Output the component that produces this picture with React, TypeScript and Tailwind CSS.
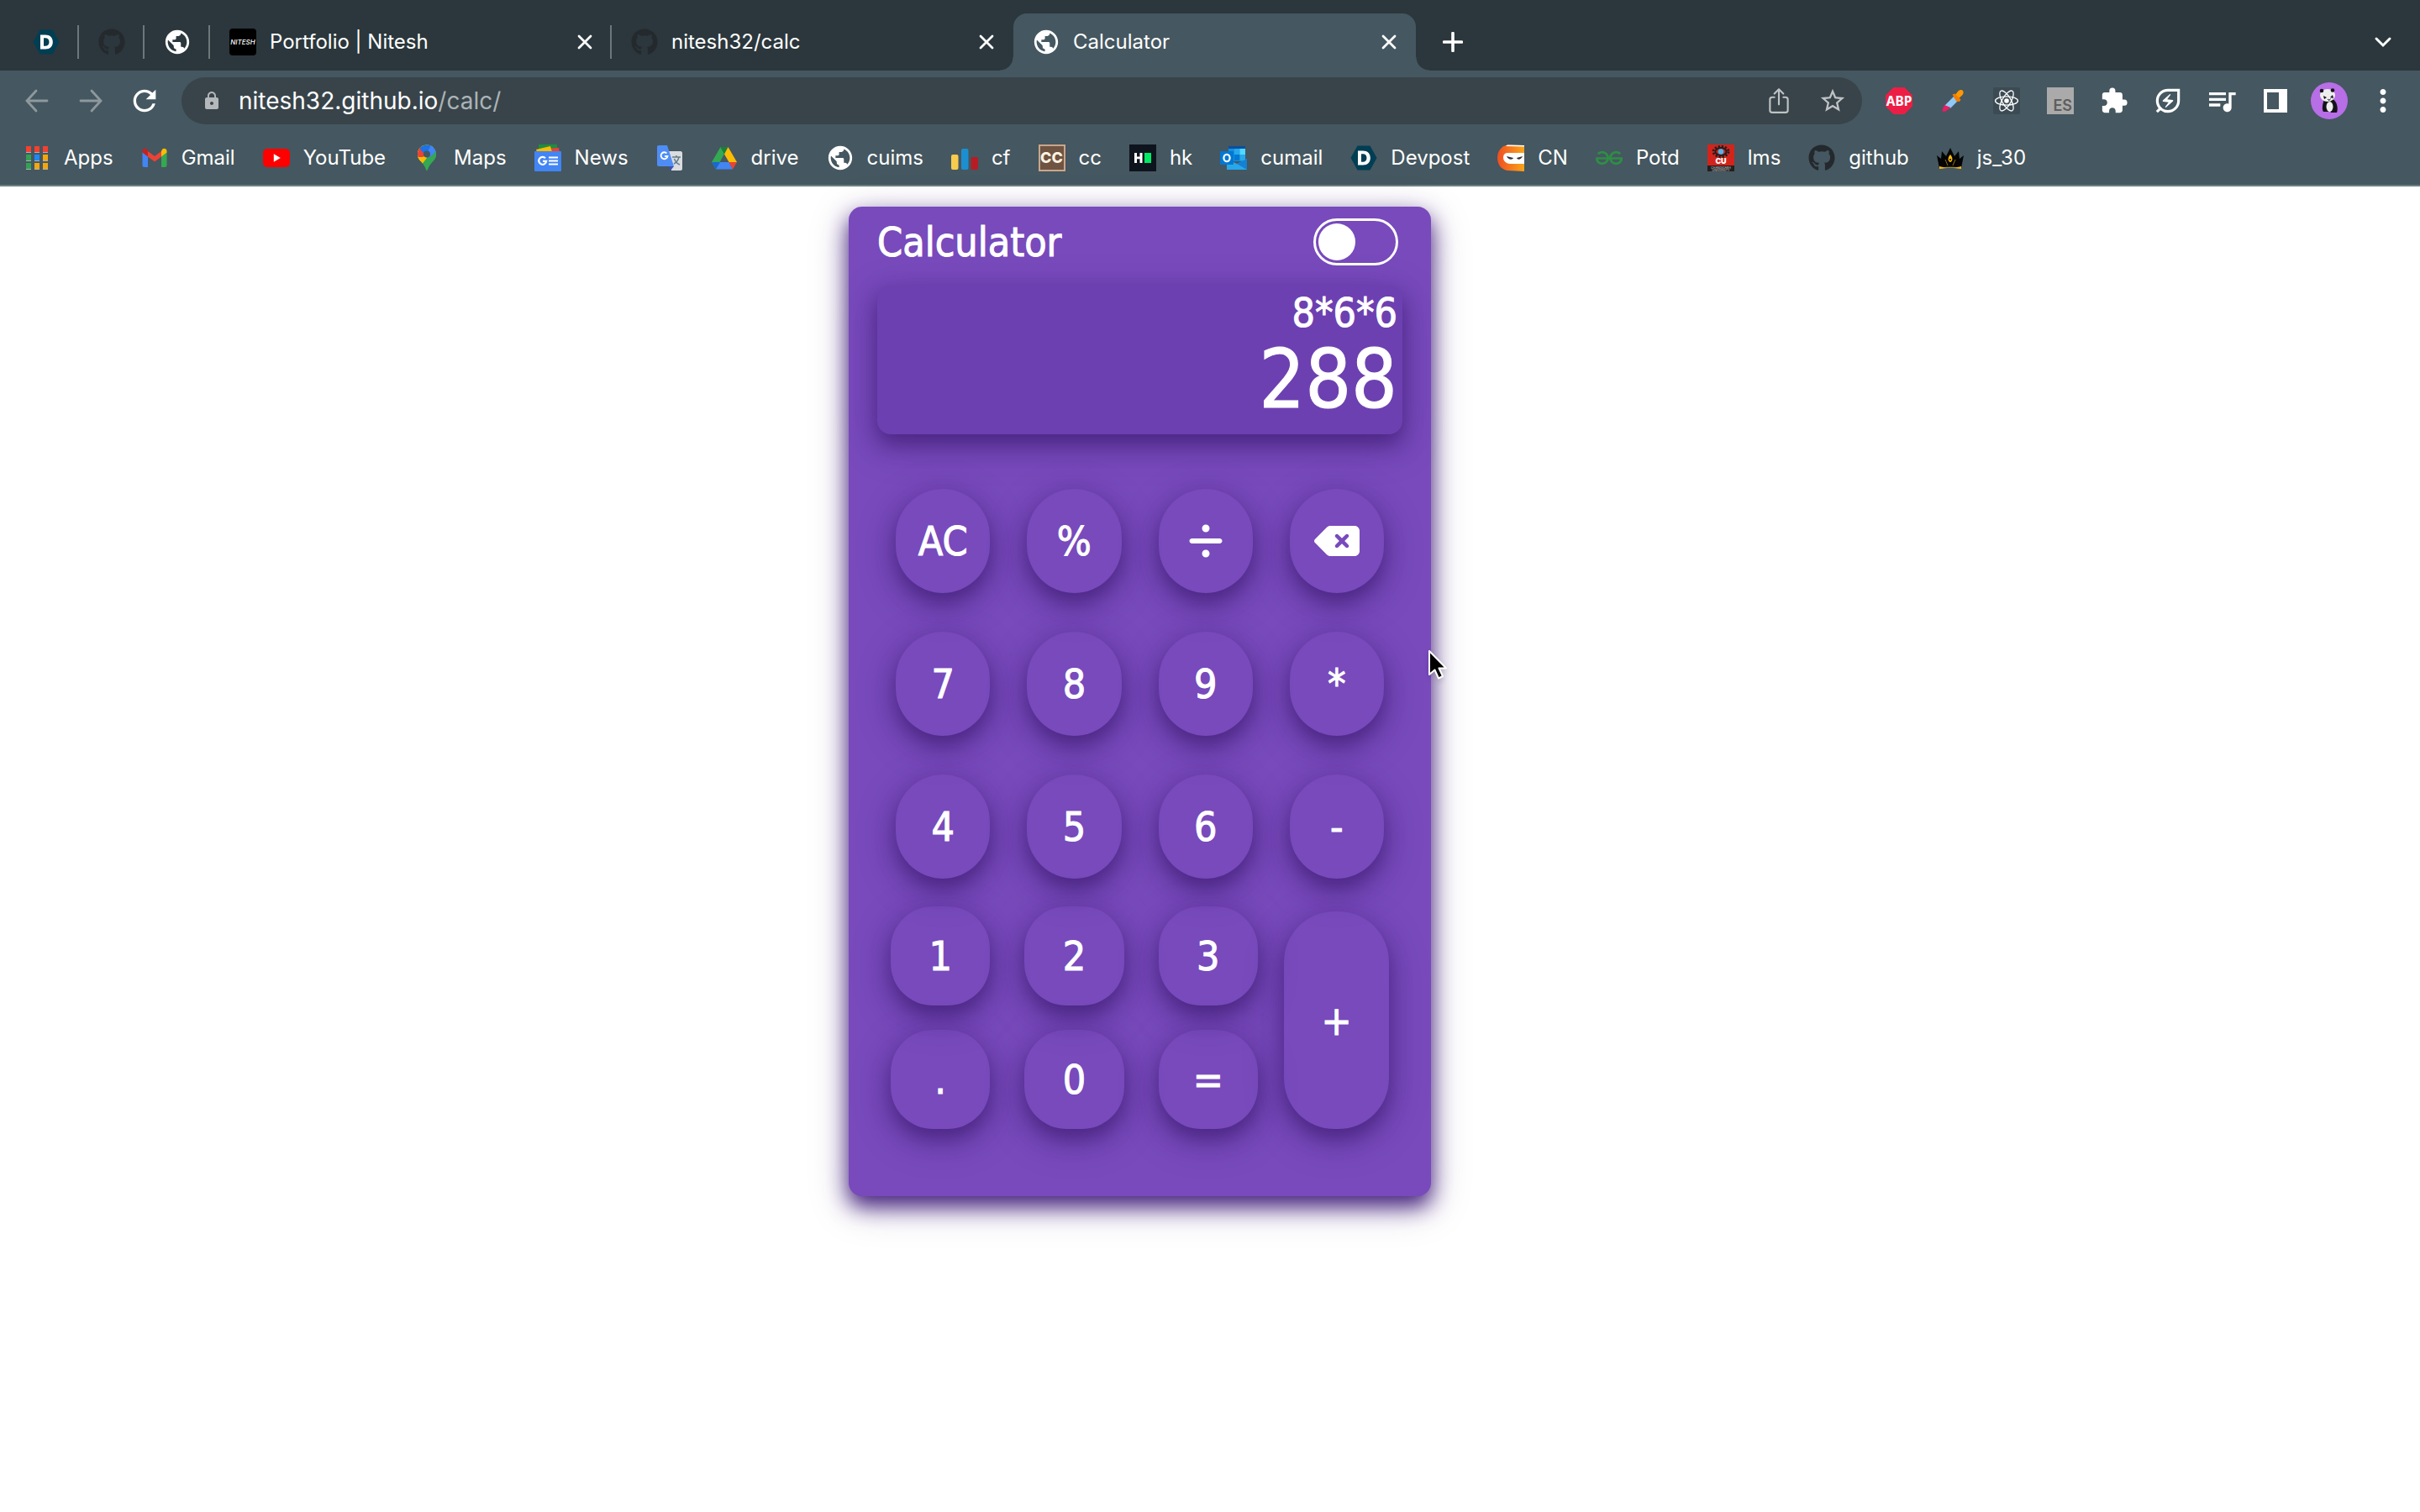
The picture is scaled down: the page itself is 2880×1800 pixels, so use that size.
import React, { useState } from "react";
import {
  MdPublic,
  MdLock,
  MdRefresh,
  MdStarBorder,
  MdExtension,
  MdOutlineEnergySavingsLeaf,
  MdQueueMusic,
  MdMoreVert,
} from "react-icons/md";
import { IoShareOutline } from "react-icons/io5";
import { FaDivide, FaDeleteLeft, FaGithub } from "react-icons/fa6";
import { SiGeeksforgeeks } from "react-icons/si";

function Devpost({ className = "size-8" }: { className?: string }) {
  return (
    <svg viewBox="0 0 32 32" className={className} aria-hidden="true">
      <path d="M8.500 1.500h15L31.500 16l-8 14.500h-15L0.500 16z" fill="#003e54" />
      <path
        fillRule="evenodd"
        d="M9 7.500h6c5.500 0 8.800 3.200 8.800 8.500s-3.300 8.500-8.800 8.500H9zM13 11.300v9.400h2c2.800 0 4.500-1.700 4.500-4.700s-1.700-4.700-4.500-4.700z"
        fill="#fff"
      />
    </svg>
  );
}

function Globe() {
  return <MdPublic className="size-[34px] -m-px text-white" />;
}

function Github() {
  return <FaGithub className="size-8 text-[#24292e]" />;
}

function CloseX() {
  return (
    <svg viewBox="0 0 20 20" className="size-5" aria-hidden="true">
      <path d="M3 3l14 14M17 3L3 17" stroke="#fff" strokeWidth="2.800" strokeLinecap="round" />
    </svg>
  );
}

function AppsIcon() {
  const colors = ["#f6402f", "#f6402f", "#f6402f", "#33a152", "#1e88f5", "#f4a60b", "#33a152", "#f4a60b", "#f4a60b"];
  return (
    <svg viewBox="0 0 32 32" className="size-8" aria-hidden="true">
      {colors.map((c, i) => (
        <g key={i}>
          <rect x={3 + (i % 3) * 10} y={3 + Math.floor(i / 3) * 10} width="6" height="7" fill="#a9b1b5" />
          <rect x={3 + (i % 3) * 10} y={2 + Math.floor(i / 3) * 10} width="6" height="7" fill={c} />
        </g>
      ))}
    </svg>
  );
}

function Gmail() {
  return (
    <svg viewBox="0 0 32 32" className="size-8" aria-hidden="true">
      <path d="M1.500 9v16c0 1.200.9 2 2 2H8V14z" fill="#4285f4" />
      <path d="M30.500 9v16c0 1.200-.9 2-2 2H24V14z" fill="#34a853" />
      <path d="M24 8v6.500l6.500-5V7.800c0-2.700-3-4-5-2.600z" fill="#fbbc04" />
      <path d="M8 14.500V8l8 6 8-6v6.500l-8 6z" fill="#ea4335" />
      <path d="M1.500 7.800v1.700l6.500 5V8L6.500 5.200c-2-1.400-5-.1-5 2.600z" fill="#c5221f" />
    </svg>
  );
}

function Youtube() {
  return (
    <svg viewBox="0 0 32 32" className="size-8" aria-hidden="true">
      <rect y="5" width="32" height="22" rx="5" fill="#f00" />
      <path d="M12.800 11.300v9.400l8-4.700z" fill="#fff" />
    </svg>
  );
}

function Maps() {
  return (
    <svg viewBox="0 0 32 32" className="size-8" aria-hidden="true">
      <clipPath id="pin">
        <path d="M16 0.500C9.700.5 5 5.400 5 11.500c0 6.500 4.500 8.500 7.500 13 1.500 2.300 2.200 4.500 3.500 7 1.300-2.500 2-4.700 3.500-7C22.500 20 27 18 27 11.500 27 5.400 22.300.5 16 .5z" />
      </clipPath>
      <g clipPath="url(#pin)">
        <rect width="32" height="32" fill="#34a853" />
        <path d="M0 22L16 11 28 0H0z" fill="#fbbc04" />
        <path d="M0 4l8 0 8 8-8 9-8-3z" fill="#fbbc04" />
        <path d="M0 0h9l7 12-5 5-8-1z" fill="#ea4335" />
        <path d="M7 4L14 0h14L15 14z" fill="#1a73e8" />
        <path d="M21 0l8 8-11 8-2-5z" fill="#4285f4" />
        <path d="M28 7L10 26l6 6 14-8z" fill="#34a853" />
        <path d="M5 15l6 0 5-3 0 4-7 9z" fill="#fbbc04" />
      </g>
      <circle cx="16" cy="11.500" r="4" fill="#455760" />
    </svg>
  );
}

function News() {
  return (
    <svg viewBox="0 0 32 32" className="size-8" aria-hidden="true">
      <path d="M5 0h22v8H5z" fill="#1e8e3e" />
      <path d="M14 5l15-1 1 6H14z" fill="#ea4335" />
      <path d="M2 6l17-4 2 7H3z" fill="#fbbc04" />
      <rect y="8" width="32" height="24" rx="1" fill="#4285f4" />
      <path d="M13 16.200a4.500 4.500 0 1 0 1.200 3.600H10" fill="none" stroke="#fff" strokeWidth="2.200" />
      <path d="M17 15.500h11M17 19.500h11M17 23.500h11" stroke="#fff" strokeWidth="2.200" />
    </svg>
  );
}

function Translate() {
  return (
    <svg viewBox="0 0 32 32" className="size-8" aria-hidden="true">
      <path d="M13 8h16c1 0 2 1 2 2v19c0 1-1 2-2 2H18z" fill="#dadce0" />
      <path d="M15 26h6l-4 5z" fill="#3b50ba" />
      <path d="M3 1h10l8 25H3c-1.200 0-2-.8-2-2V3c0-1.200.8-2 2-2z" fill="#4f8df6" />
      <path d="M12.500 10.500a4 4 0 1 0 1 3.500H10" fill="none" stroke="#fff" strokeWidth="1.800" />
      <path d="M19 15h10M24 13v2M27 15c-1 4-4 7-6 8M21.500 17c1 3 4 6 6.500 7" fill="none" stroke="#607d8b" strokeWidth="1.500" />
    </svg>
  );
}

function Drive() {
  return (
    <svg viewBox="0 0 32 32" className="size-8" aria-hidden="true">
      <path d="M11.500 3L1 21l5 8.500L16 11z" fill="#34a853" />
      <path d="M11.500 3h9L16 11.500z" fill="#188038" />
      <path d="M20.500 3L16 11.500 21.500 21H31z" fill="#fbbc04" />
      <path d="M1 21h10L6 29.500z" fill="#1967d2" />
      <path d="M11 21h10.500l4.500 8.500H6z" fill="#4285f4" />
      <path d="M21.500 21H31l-5 8.500z" fill="#ea4335" />
    </svg>
  );
}

function Codeforces() {
  return (
    <svg viewBox="0 0 32 32" className="size-8" aria-hidden="true">
      <rect y="12" width="8.500" height="18" rx="2" fill="#f7cb4d" />
      <rect x="12" y="5" width="8.500" height="25" rx="2" fill="#1c8fd0" />
      <rect x="23.500" y="15" width="8.500" height="15" rx="2" fill="#b71c25" />
    </svg>
  );
}

function CodeChef() {
  return (
    <span className="flex size-8 items-center justify-center border-2 border-[#c9a68c] bg-[#6f5442] text-lg font-extrabold leading-none text-[#fdf3e3]">
      CC
    </span>
  );
}

function HackerRank() {
  return (
    <svg viewBox="0 0 32 32" className="size-8" aria-hidden="true">
      <rect width="32" height="32" fill="#0e141e" />
      <path d="M6 10h3v4.500h3.500V10h3v12h-3v-4.700H9V22H6z" fill="#fff" />
      <rect x="18" y="10" width="8" height="12" fill="#00ea64" />
    </svg>
  );
}

function Outlook() {
  return (
    <svg viewBox="0 0 32 32" className="size-8" aria-hidden="true">
      <rect x="10" y="2" width="20" height="18" fill="#1490df" />
      <rect x="10" y="2" width="20" height="3" fill="#0a4fa3" />
      <rect x="17" y="5" width="6.500" height="7" fill="#28a8ea" />
      <rect x="23.500" y="5" width="6.500" height="7" fill="#50d9ff" />
      <rect x="17" y="12" width="6.500" height="7" fill="#0078d4" />
      <rect x="23.500" y="12" width="6.500" height="7" fill="#28a8ea" />
      <path d="M8 17l12 6 12-6v13H8z" fill="#28a8ea" />
      <path d="M20 23l12-6v13z" fill="#1481d2" />
      <rect y="8" width="16" height="16" rx="1" fill="#0078d4" />
      <ellipse cx="8" cy="16" rx="3.600" ry="4.200" fill="none" stroke="#fff" strokeWidth="2.200" />
    </svg>
  );
}

function CodingNinjas() {
  return (
    <svg viewBox="0 0 32 32" className="size-8" aria-hidden="true">
      <defs>
        <linearGradient id="ninja">
          <stop offset="0" stopColor="#f04e23" />
          <stop offset="1" stopColor="#f9a51a" />
        </linearGradient>
      </defs>
      <path d="M12 0.500L32 1v31l-20-1C5 30 0 24 0 16S5 1.500 12 .5z" fill="url(#ninja)" />
      <path d="M12 0.500L32 1v1.500L10 2z" fill="#fff" />
      <path d="M32 10H13c-4 0-6 2-6 5.500S10 23 15 23h17z" fill="#fff" />
      <path d="M11 14l8 2c-1 2.500-6 2.500-8-2zM30 14l-7 2c1 2.500 5 2.500 7-2z" fill="#333" />
    </svg>
  );
}

function ChandigarhUniversity() {
  return (
    <svg viewBox="0 0 32 32" className="size-8" aria-hidden="true">
      <rect width="32" height="32" fill="#d3241c" />
      <ellipse cx="16" cy="8.500" rx="9" ry="6" fill="none" stroke="#231f20" strokeWidth="3" strokeDasharray="2.200 1.800" />
      <ellipse cx="16" cy="8.500" rx="6.500" ry="4.500" fill="none" stroke="#231f20" strokeWidth="2" />
      <circle cx="16" cy="8.500" r="3.200" fill="#52b4e8" />
      <rect y="25" width="32" height="7" fill="#231f20" />
      <text x="16" y="23" textAnchor="middle" fontSize="9" fontWeight="900" fill="#fff">
        CU
      </text>
      <text x="16" y="28.500" textAnchor="middle" fontSize="3.500" fill="#ddd">
        CHANDIGARH
      </text>
      <text x="16" y="31.500" textAnchor="middle" fontSize="3.500" fill="#ddd">
        UNIVERSITY
      </text>
    </svg>
  );
}

function Crown() {
  return (
    <svg viewBox="0 0 32 32" className="size-8" aria-hidden="true">
      <path d="M0 13l5 4 1-9 5 6 5-10 5 10 5-6 1 9 5-4-3 15c-8-2-18-2-26 0z" fill="#050505" />
      <path d="M16 12c3 3 3.500 8 0 9-3.500-1-3-6 0-9z" fill="#f5b90f" />
      <circle cx="16" cy="18" r="1" fill="#050505" />
      <path d="M10 18l3 7M22 18l-3 7" stroke="#b98a10" strokeWidth="0.800" />
      <path d="M3 26c8 2 18 2 26 0v3c-8-1.500-18-1.500-26 0z" fill="#f5b90f" />
    </svg>
  );
}

function ReactBadge() {
  return (
    <svg viewBox="0 0 32 32" className="size-8" aria-hidden="true">
      <rect width="32" height="32" rx="2" fill="#3c4b53" />
      <g fill="none" stroke="#fff" strokeWidth="1.300">
        <ellipse cx="16" cy="16" rx="13.500" ry="5.200" />
        <ellipse cx="16" cy="16" rx="13.500" ry="5.200" transform="rotate(60 16 16)" />
        <ellipse cx="16" cy="16" rx="13.500" ry="5.200" transform="rotate(120 16 16)" />
      </g>
      <circle cx="16" cy="16" r="2.800" fill="#fff" />
    </svg>
  );
}

function AdblockPlus() {
  return (
    <svg viewBox="0 0 32 32" className="size-8" aria-hidden="true">
      <path d="M9.500 0h13L32 9.500v13L22.500 32h-13L0 22.500v-13z" fill="#ed1e45" />
      <text x="16" y="22" textAnchor="middle" fontSize="15.500" fontWeight="700" fontFamily="Noto Sans" fill="#fff">
        ABP
      </text>
    </svg>
  );
}

function Dropper() {
  return (
    <svg viewBox="0 0 32 32" className="size-8" aria-hidden="true">
      <path d="M17 11l5 5-9 9-7-3z" fill="#90caf9" />
      <path d="M6 21l7.500 3-6 4.500-3 .5-1-1 .5-2.500z" fill="#e91e63" />
      <path d="M22 5c2-2.500 5-2.500 6-1s1 4-1.500 6L22 14l-4-4z" fill="#ff9800" />
      <path d="M15.500 8.500l3-1 7 7-1.500 2.500-4-.500z" fill="#f57c00" />
    </svg>
  );
}

function SidePanel() {
  return (
    <svg viewBox="0 0 28 28" className="size-7" aria-hidden="true">
      <path fillRule="evenodd" d="M0 0h28v28H0zM4 4v20h14V4z" fill="#fff" />
    </svg>
  );
}

function Panda() {
  return (
    <svg viewBox="0 0 44 44" className="size-11" aria-hidden="true">
      <circle cx="22" cy="22" r="22" fill="#b76ee6" />
      <path d="M16 20c-2 6-3 12-1 15h6l1-4 2 5h7c2-5 0-14-5-16z" fill="#15121a" />
      <ellipse cx="22.500" cy="29" rx="4" ry="6" fill="#eee" />
      <ellipse cx="20" cy="15.500" rx="9" ry="7.500" fill="#eee" />
      <circle cx="13" cy="10" r="2.300" fill="#15121a" />
      <circle cx="26" cy="9.500" r="2.300" fill="#15121a" />
      <path d="M15 16l4 2-3 2zM26 15l-3 3 4 1z" fill="#15121a" />
      <path d="M20 20l2 1.500 1.500-2" fill="none" stroke="#15121a" />
    </svg>
  );
}

function Arrow({ flip = false }: { flip?: boolean }) {
  return (
    <svg viewBox="0 0 28 28" className="size-7" aria-hidden="true">
      <path
        d={flip ? "M2 14h23M15 2l11 12-11 12" : "M26 14H3M13 2L2 14l11 12"}
        fill="none"
        stroke="#8e989d"
        strokeWidth="2.800"
        strokeLinecap="round"
      />
    </svg>
  );
}

const pinned = [
  { label: "Devpost", icon: <Devpost /> },
  { label: "GitHub", icon: <Github /> },
  { label: "Site", icon: <Globe /> },
];

const bookmarks: { label: string; icon: React.ReactNode }[] = [
  { label: "Apps", icon: <AppsIcon /> },
  { label: "Gmail", icon: <Gmail /> },
  { label: "YouTube", icon: <Youtube /> },
  { label: "Maps", icon: <Maps /> },
  { label: "News", icon: <News /> },
  { label: "", icon: <Translate /> },
  { label: "drive", icon: <Drive /> },
  { label: "cuims", icon: <Globe /> },
  { label: "cf", icon: <Codeforces /> },
  { label: "cc", icon: <CodeChef /> },
  { label: "hk", icon: <HackerRank /> },
  { label: "cumail", icon: <Outlook /> },
  { label: "Devpost", icon: <Devpost /> },
  { label: "CN", icon: <CodingNinjas /> },
  { label: "Potd", icon: <SiGeeksforgeeks className="size-8 text-[#2f8d46]" /> },
  { label: "lms", icon: <ChandigarhUniversity /> },
  { label: "github", icon: <Github /> },
  { label: "js_30", icon: <Crown /> },
];

const extensions: { label: string; icon: React.ReactNode }[] = [
  { label: "Adblock Plus", icon: <AdblockPlus /> },
  { label: "Color picker", icon: <Dropper /> },
  { label: "React tools", icon: <ReactBadge /> },
  {
    label: "ES",
    icon: (
      <span className="flex size-8 items-end justify-end bg-[#aaaaaa] pr-0.5 text-lg font-semibold leading-5 text-[#5e5e5e]">
        ES
      </span>
    ),
  },
  { label: "Extensions", icon: <MdExtension className="size-[34px] text-white" /> },
  { label: "Energy saver", icon: <MdOutlineEnergySavingsLeaf className="size-[38px] text-white" /> },
  { label: "Media control", icon: <MdQueueMusic className="size-10 text-white" /> },
  { label: "Side panel", icon: <SidePanel /> },
  { label: "Profile", icon: <Panda /> },
  { label: "Menu", icon: <MdMoreVert className="size-[42px] text-white" /> },
];

function Tab({ icon, title, active = false }: { icon: React.ReactNode; title: string; active?: boolean }) {
  return (
    <div
      className={
        active
          ? "relative flex h-[68px] w-[479px] items-center rounded-t-2xl bg-[#455760] pl-[23px] pr-[22px]"
          : "flex h-[68px] w-[478px] items-center pl-[23px] pr-[22px]"
      }
    >
      {active && (
        <>
          <span className="absolute bottom-0 right-full size-4 bg-[radial-gradient(circle_at_0_0,#2b373c_15px,#455760_16px)]" />
          <span className="absolute bottom-0 left-full size-4 bg-[radial-gradient(circle_at_100%_0,#2b373c_15px,#455760_16px)]" />
        </>
      )}
      <span className="shrink-0">{icon}</span>
      <span className="ml-4 flex-1 truncate text-2xl leading-8 text-white">{title}</span>
      <button aria-label={`Close ${title}`}>
        <CloseX />
      </button>
    </div>
  );
}

function Divider() {
  return <span className="-ml-0.5 h-10 w-0.5 bg-[#6d777b]" />;
}

function Browser() {
  return (
    <header className="border-b-2 border-[#6f7f83] bg-[#455760] font-[Inter,sans-serif]">
      <nav aria-label="Tabs" className="flex h-[84px] items-center bg-[#2b373c] pl-4 pt-4">
        {pinned.map((p) => (
          <React.Fragment key={p.label}>
            <button aria-label={p.label} className="flex h-[68px] w-[78px] items-center justify-center">
              {p.icon}
            </button>
            <Divider />
          </React.Fragment>
        ))}
        <Tab
          title="Portfolio | Nitesh"
          icon={
            <span className="flex size-8 items-center justify-center rounded-sm bg-black text-[8px] font-medium italic text-white">
              NITESH
            </span>
          }
        />
        <Divider />
        <Tab title="nitesh32/calc" icon={<Github />} />
        <Tab title="Calculator" active icon={<Globe />} />
        <button aria-label="New tab" className="ml-8">
          <svg viewBox="0 0 24 24" className="size-6" aria-hidden="true">
            <path d="M12 1.500v21M1.500 12h21" stroke="#fff" strokeWidth="3.600" strokeLinecap="round" />
          </svg>
        </button>
        <button aria-label="Search tabs" className="ml-auto mr-8">
          <svg viewBox="0 0 24 24" className="size-6" aria-hidden="true">
            <path d="M4 8l8 8 8-8" fill="none" stroke="#fff" strokeWidth="3" strokeLinecap="round" />
          </svg>
        </button>
      </nav>

      <div className="flex h-[72px] items-center">
        <div className="flex items-center gap-[30px] pl-[30px] pr-6">
          <button aria-label="Back" className="w-[34px]">
            <Arrow />
          </button>
          <button aria-label="Forward" className="w-7">
            <Arrow flip />
          </button>
          <button aria-label="Reload">
            <MdRefresh className="size-10 text-white" />
          </button>
        </div>
        <div className="flex h-14 flex-1 items-center rounded-full bg-[#38444a] pl-6 pr-[18px] text-[#bfc3c5]">
          <MdLock className="size-6 text-[#b4b8bb]" />
          <a href="#address" className="ml-5 flex-1 text-[28px] leading-10 text-white">
            nitesh32.github.io<span className="text-[#abb3b6]">/calc/</span>
          </a>
          <button aria-label="Share" className="mr-[30px]">
            <IoShareOutline className="size-[34px]" />
          </button>
          <button aria-label="Bookmark this tab">
            <MdStarBorder className="size-[34px]" />
          </button>
        </div>
        <div className="flex items-center pl-3 pr-3">
          {extensions.map((e) => (
            <button key={e.label} aria-label={e.label} className="flex w-16 items-center justify-center">
              {e.icon}
            </button>
          ))}
        </div>
      </div>

      <nav aria-label="Bookmarks" className="flex h-16 items-center gap-[33px] pl-7">
        {bookmarks.map((b) => (
          <a
            key={b.label}
            href="#bookmark"
            aria-label={b.label || "Translate"}
            className="flex items-center gap-4 text-2xl leading-8 text-white"
          >
            {b.icon}
            {b.label && <span>{b.label}</span>}
          </a>
        ))}
      </nav>
    </header>
  );
}

const keyBase =
  "flex items-center justify-center text-5xl text-white shadow-[0_12px_24px_rgba(70,35,126,0.85),0_12px_48px_rgba(50,20,100,0.25)]";

const topKeys: { label: string; face: React.ReactNode }[] = [
  { label: "AC", face: "AC" },
  { label: "%", face: "%" },
  { label: "divide", face: <FaDivide /> },
  { label: "delete", face: <FaDeleteLeft className="h-12 w-[54px]" /> },
  ...["7", "8", "9", "*", "4", "5", "6", "-"].map((k) => ({ label: k, face: k })),
];

const lowKeys = ["1", "2", "3", ".", "0", "="];

function Cursor() {
  return (
    <svg viewBox="0 0 24 40" className="absolute left-full top-[526px] -ml-1 h-10 w-6 drop-shadow-md" aria-hidden="true">
      <path
        d="M2 3v28l6.500-5.500 4.500 10 5-2.500-4.500-9.500H22z"
        fill="#000"
        stroke="#fff"
        strokeWidth="2"
        strokeLinejoin="round"
      />
    </svg>
  );
}

function Calculator() {
  const [dark, setDark] = useState(false);
  return (
    <section className="relative rounded-2xl bg-[#784abc] pb-20 font-['DejaVu_Sans_Condensed','Noto_Sans',sans-serif] text-white [-webkit-text-stroke:1px_white] shadow-[0_12px_26px_#46237e,0_12px_48px_rgba(50,20,100,0.25)]">
      <div className="flex items-center justify-between pl-[34px] pr-[39px] pt-3.5">
        <h1 className="text-5xl leading-[56px]">Calculator</h1>
        <input
          type="checkbox"
          role="switch"
          aria-label="Theme"
          checked={dark}
          onChange={() => setDark(!dark)}
          className="h-14 w-[101px] appearance-none rounded-full border-[3px] border-white p-[3px] before:block before:size-11 before:rounded-full before:bg-white checked:before:ml-auto"
        />
      </div>
      <output className="mx-[34px] mt-6 block h-[177px] rounded-2xl bg-[#6d40b1] pr-1.5 pt-1 text-right shadow-[0_12px_24px_rgba(70,35,126,0.85),0_12px_48px_rgba(50,20,100,0.25)]">
        <span className="block text-5xl leading-[56px]">8*6*6</span>
        <span className="block text-8xl leading-[104px]">288</span>
      </output>
      <div className="mt-[65px] grid grid-cols-4 gap-x-11 gap-y-[46px] px-14">
        {topKeys.map((k) => (
          <button key={k.label} aria-label={k.label} className={`${keyBase} h-[124px] rounded-full`}>
            {k.face}
          </button>
        ))}
      </div>
      <div className="mt-[33px] flex items-end px-[50px]">
        <div className="grid flex-1 grid-cols-3 gap-x-[41px] gap-y-[29px]">
          {lowKeys.map((k) => (
            <button key={k} className={`${keyBase} h-[118px] rounded-[50px]`}>
              {k}
            </button>
          ))}
        </div>
        <button className={`${keyBase} ml-[31px] h-[259px] w-[125px] rounded-[60px]`}>+</button>
      </div>
      <Cursor />
    </section>
  );
}

export default function App() {
  return (
    <div className="min-h-screen bg-white">
      <Browser />
      <main className="grid grid-cols-[1010fr_693fr_1177fr] pt-6">
        <div className="col-start-2">
          <Calculator />
        </div>
      </main>
    </div>
  );
}
